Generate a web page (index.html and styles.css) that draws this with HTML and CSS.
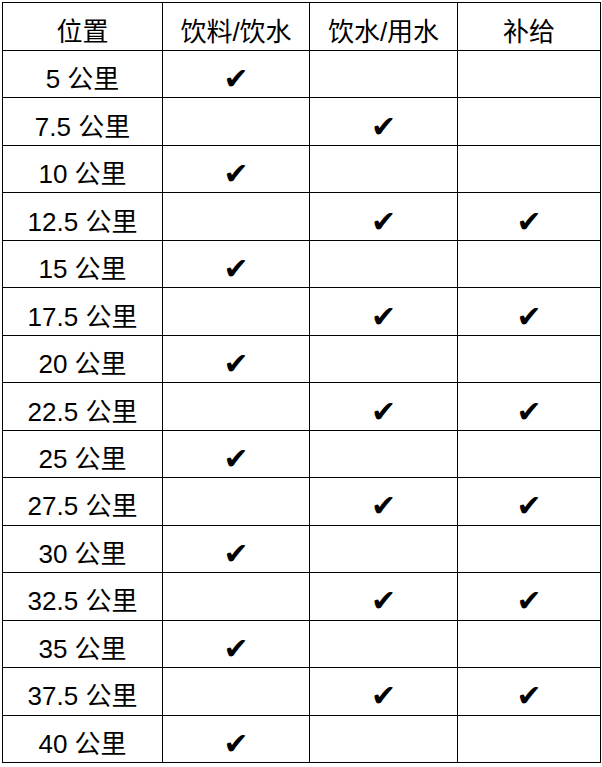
FILE: index.html
```html
<!DOCTYPE html>
<html lang="zh">
<head>
<meta charset="utf-8">
<title>补给站</title>
<link rel="stylesheet" href="styles.css">
</head>
<body>
<table class="stations">
  <colgroup>
    <col class="c1"><col class="c2"><col class="c3"><col class="c4">
  </colgroup>
  <thead>
    <tr class="head"><th>位置</th><th>饮料/饮水</th><th>饮水/用水</th><th>补给</th></tr>
  </thead>
  <tbody>
    <tr><td>5 公里</td><td class="ck">✔</td><td></td><td></td></tr>
    <tr><td>7.5 公里</td><td></td><td class="ck">✔</td><td></td></tr>
    <tr><td>10 公里</td><td class="ck">✔</td><td></td><td></td></tr>
    <tr><td>12.5 公里</td><td></td><td class="ck">✔</td><td class="ck">✔</td></tr>
    <tr><td>15 公里</td><td class="ck">✔</td><td></td><td></td></tr>
    <tr><td>17.5 公里</td><td></td><td class="ck">✔</td><td class="ck">✔</td></tr>
    <tr><td>20 公里</td><td class="ck">✔</td><td></td><td></td></tr>
    <tr><td>22.5 公里</td><td></td><td class="ck">✔</td><td class="ck">✔</td></tr>
    <tr><td>25 公里</td><td class="ck">✔</td><td></td><td></td></tr>
    <tr><td>27.5 公里</td><td></td><td class="ck">✔</td><td class="ck">✔</td></tr>
    <tr><td>30 公里</td><td class="ck">✔</td><td></td><td></td></tr>
    <tr><td>32.5 公里</td><td></td><td class="ck">✔</td><td class="ck">✔</td></tr>
    <tr><td>35 公里</td><td class="ck">✔</td><td></td><td></td></tr>
    <tr><td>37.5 公里</td><td></td><td class="ck">✔</td><td class="ck">✔</td></tr>
    <tr><td>40 公里</td><td class="ck">✔</td><td></td><td></td></tr>
  </tbody>
</table>
</body>
</html>
```
FILE: styles.css
```css
html, body {
  margin: 0;
  padding: 0;
  background: #ffffff;
}
body {
  padding: 2px 0 0 2px;
}
.stations {
  border-collapse: collapse;
  table-layout: fixed;
  width: 598px;
  font-family: "Liberation Sans", "Noto Sans CJK SC", sans-serif;
  font-size: 26px;
  color: #000;
}
.c1 { width: 160px; }
.c2 { width: 147px; }
.c3 { width: 148px; }
.c4 { width: 143px; }
.stations th, .stations td {
  border: 1px solid #000;
  padding: 10px 0 0 0;
  text-align: center;
  vertical-align: middle;
  font-weight: normal;
  line-height: 1;
}
.stations tr { height: 47.47px; }
.stations tr.head { height: 48px; }
.stations .ck {
  font-family: "DejaVu Sans", sans-serif;
  font-size: 30px;
}
```
